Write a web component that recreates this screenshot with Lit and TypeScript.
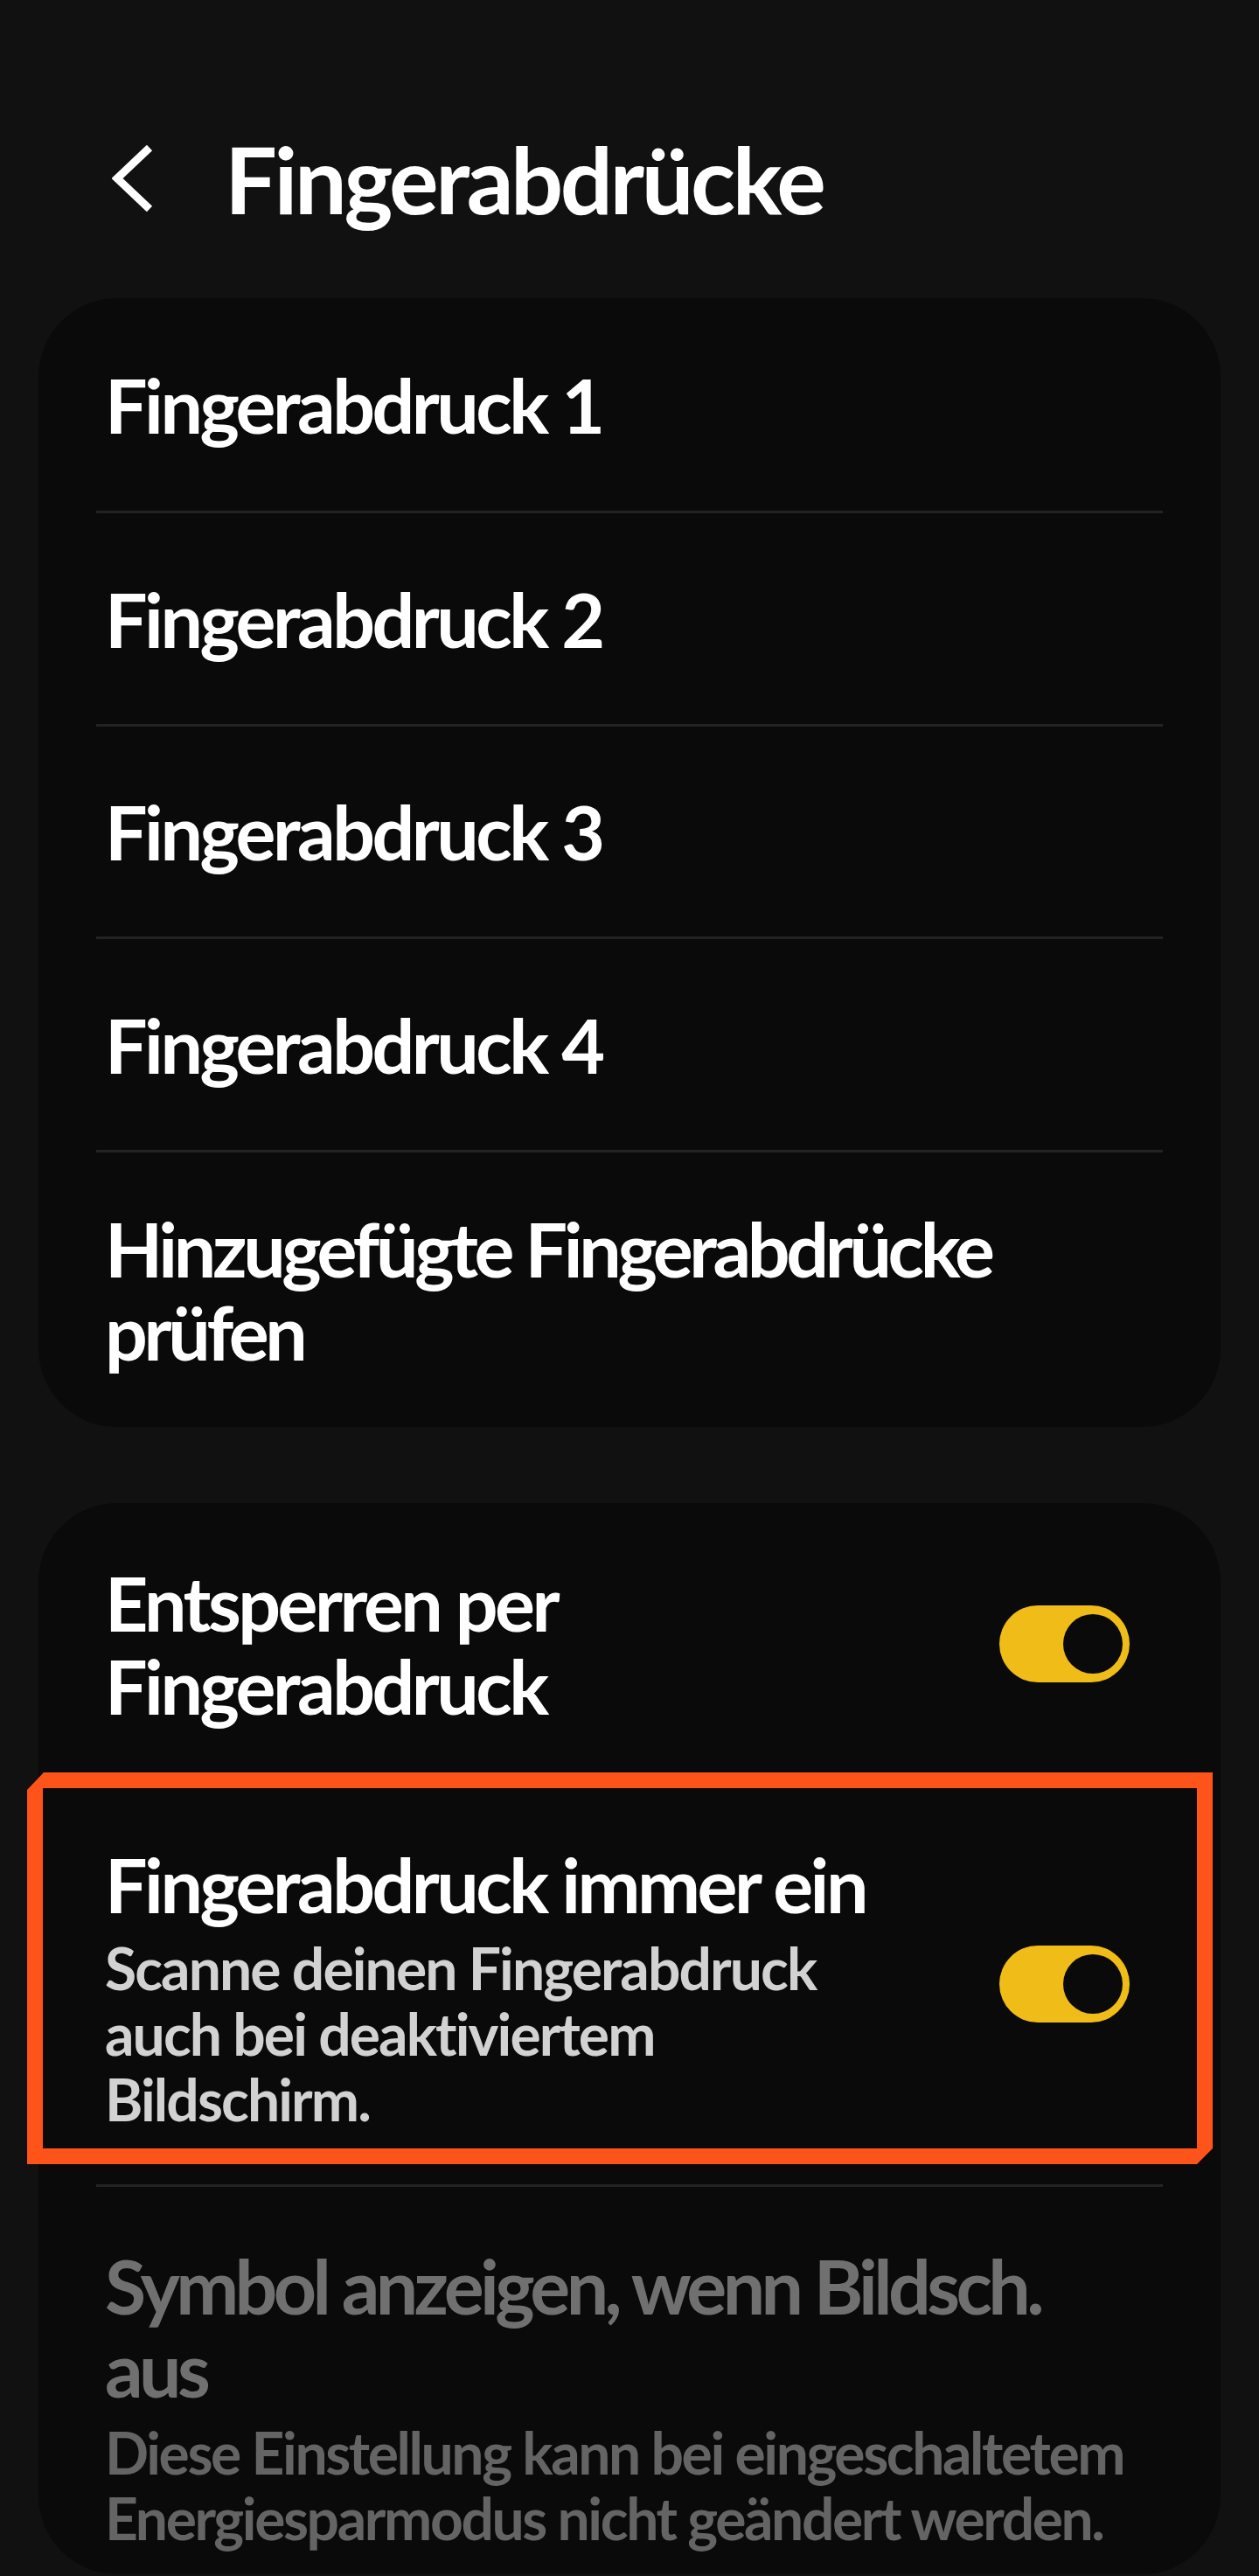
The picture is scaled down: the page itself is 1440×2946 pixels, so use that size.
import { LitElement, html, css, svg } from 'lit';
import { customElement, property } from 'lit/decorators.js';

@customElement('toggle-switch')
export class ToggleSwitch extends LitElement {
  static styles = css`
    :host {
      display: block;
      flex: none;
      width: 149px;
      height: 88px;
      border-radius: 44px;
      background: #f0bc18;
      position: relative;
    }
    .knob {
      position: absolute;
      top: 10px;
      right: 8px;
      width: 68px;
      height: 68px;
      border-radius: 50%;
      background: #0a0a0a;
    }
  `;

  render() {
    return html`<div class="knob"></div>`;
  }
}

@customElement('setting-row')
export class SettingRow extends LitElement {
  @property() label = '';
  @property() sub = '';
  @property({ type: Boolean }) toggle = false;
  @property({ type: Boolean }) muted = false;
  @property({ type: Boolean }) divider = false;

  static styles = css`
    :host {
      display: flex;
      flex-direction: column;
      flex: none;
      box-sizing: border-box;
      position: relative;
    }
    .row {
      flex: 1;
      display: flex;
      align-items: center;
      justify-content: space-between;
      padding: 0 104px 0 76px;
    }
    .text {
      display: flex;
      flex-direction: column;
    }
    .text.with-sub {
      padding-top: 7px;
    }
    .label {
      font-size: 86px;
      line-height: 95px;
      font-weight: 700;
      letter-spacing: var(--label-track, -3.5px);
      color: #fff;
      white-space: pre;
    }
    .sub {
      margin-top: 11px;
      font-size: 66px;
      line-height: 75px;
      font-weight: 700;
      letter-spacing: var(--sub-track, -1.9px);
      color: #d2d2d2;
      white-space: pre;
    }
    .muted .label {
      color: #707070;
    }
    .muted .sub {
      color: #646464;
    }
    .line {
      flex: none;
      height: 3px;
      margin: 0 66px;
      background: #232323;
    }
  `;

  render() {
    return html`
      <div class="row ${this.muted ? 'muted' : ''}">
        <div class="text ${this.sub ? 'with-sub' : ''}">
          <div class="label">${this.label}</div>
          ${this.sub ? html`<div class="sub">${this.sub}</div>` : ''}
        </div>
        ${this.toggle ? html`<toggle-switch></toggle-switch>` : ''}
      </div>
      ${this.divider ? html`<div class="line"></div>` : ''}
      <slot></slot>
    `;
  }
}

const HIGHLIGHT = svg`<path fill-rule="evenodd" fill="#ff5419"
  d="M19 0H1356V430L1338 448H0V20ZM18 18V430H1338V18Z"/>`;

@customElement('app-root')
export class AppRoot extends LitElement {
  static styles = css`
    :host {
      display: block;
      width: 1440px;
      height: 2946px;
      overflow: hidden;
      background: #111111;
      font-family: Lato, 'Liberation Sans', sans-serif;
    }
    .header {
      height: 341px;
      display: flex;
      align-items: center;
      gap: 82px;
      padding: 66px 0 0 128px;
      box-sizing: border-box;
    }
    .back {
      display: block;
      flex: none;
    }
    h1 {
      margin: 0;
      font-size: 106px;
      font-weight: 700;
      letter-spacing: -3.4px;
      color: #fff;
      line-height: 120px;
    }
    .card {
      margin: 0 44px;
      background: #0a0a0a;
      border-radius: 90px;
      display: flex;
      flex-direction: column;
    }
    .first {
      height: 1291px;
    }
    .first setting-row {
      height: 243.5px;
    }
    .first setting-row:first-child {
      height: 246px;
    }
    .first setting-row:last-child {
      height: 314.5px;
    }
    .first .tight {
      --label-track: -4.35px;
    }
    .second {
      height: 1225px;
      margin-top: 87px;
    }
    .unlock {
      height: 317px;
      padding-top: 4px;
    }
    .always {
      height: 465px;
      padding-top: 4px;
    }
    .symbol {
      flex: 1;
      padding-top: 30px;
      --label-track: -4.6px;
      --sub-track: -2.4px;
    }
    .highlight {
      position: absolute;
      top: -9px;
      left: -13px;
      display: block;
    }
  `;

  render() {
    return html`
      <div class="header">
        <svg class="back" width="47" height="76" viewBox="0 0 47 76">
          <path d="M43 3L6 38L43 73" fill="none" stroke="#fff" stroke-width="9"/>
        </svg>
        <h1>Fingerabdrücke</h1>
      </div>
      <div class="card first">
        <setting-row label="Fingerabdruck 1" divider></setting-row>
        <setting-row label="Fingerabdruck 2" divider></setting-row>
        <setting-row label="Fingerabdruck 3" divider></setting-row>
        <setting-row label="Fingerabdruck 4" divider></setting-row>
        <setting-row class="tight" label="Hinzugefügte Fingerabdrücke
prüfen"></setting-row>
      </div>
      <div class="card second">
        <setting-row class="unlock" toggle label="Entsperren per
Fingerabdruck"></setting-row>
        <setting-row class="always" toggle divider label="Fingerabdruck immer ein" sub="Scanne deinen Fingerabdruck
auch bei deaktiviertem
Bildschirm.">
          <svg class="highlight" width="1356" height="448" viewBox="0 0 1356 448">${HIGHLIGHT}</svg>
        </setting-row>
        <setting-row class="symbol" muted label="Symbol anzeigen, wenn Bildsch.
aus" sub="Diese Einstellung kann bei eingeschaltetem
Energiesparmodus nicht geändert werden."></setting-row>
      </div>
    `;
  }
}
